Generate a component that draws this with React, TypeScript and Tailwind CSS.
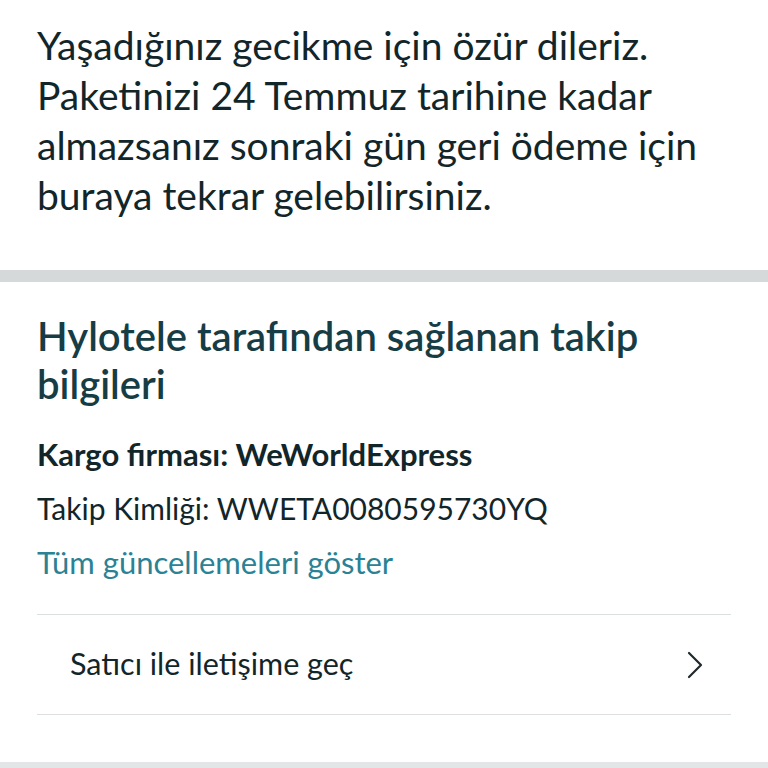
import React from "react";

function Chevron() {
  return (
    <svg width="16" height="28" viewBox="0 0 16 28" fill="none" className="shrink-0">
      <path d="M2 2 L14 14 L2 26" stroke="#1f2a2c" strokeWidth="2.2" strokeLinecap="round" strokeLinejoin="round" />
    </svg>
  );
}

export default function App() {
  return (
    <div className="min-h-[768px] bg-white font-['Lato',sans-serif] text-[#12262a]">
      <section className="px-[37px] pt-[20px] pb-[50px]">
        <p className="text-[39px] leading-[50px]">
          Yaşadığınız gecikme için özür dileriz. Paketinizi 24 Temmuz tarihine kadar almazsanız
          sonraki gün geri ödeme için buraya tekrar gelebilirsiniz.
        </p>
      </section>

      <div className="h-[12px] bg-[#d5d9d9]" />

      <section className="px-[37px] pt-[30px]">
        <h2 className="text-[40px] leading-[48px] font-semibold text-[#163d45]">
          Hylotele tarafından sağlanan takip bilgileri
        </h2>
        <div className="mt-[19px] pb-[25px]">
          <div className="text-[31px] leading-[54px] font-bold">Kargo firması: WeWorldExpress</div>
          <div className="text-[30px] leading-[54px]">Takip Kimliği: WWETA0080595730YQ</div>
          <div className="text-[31px] leading-[54px] text-[#2a8294]">Tüm güncellemeleri göster</div>
        </div>
        <div className="flex h-[101px] items-center justify-between border-y border-[#dcdfdf] pl-[33px] pr-[28px]">
          <span className="pb-[4px] text-[30.5px] leading-[40px]">Satıcı ile iletişime geç</span>
          <Chevron />
        </div>
      </section>

      <div className="mt-[47px] h-[12px] bg-[#e3e6e6]" />
    </div>
  );
}
